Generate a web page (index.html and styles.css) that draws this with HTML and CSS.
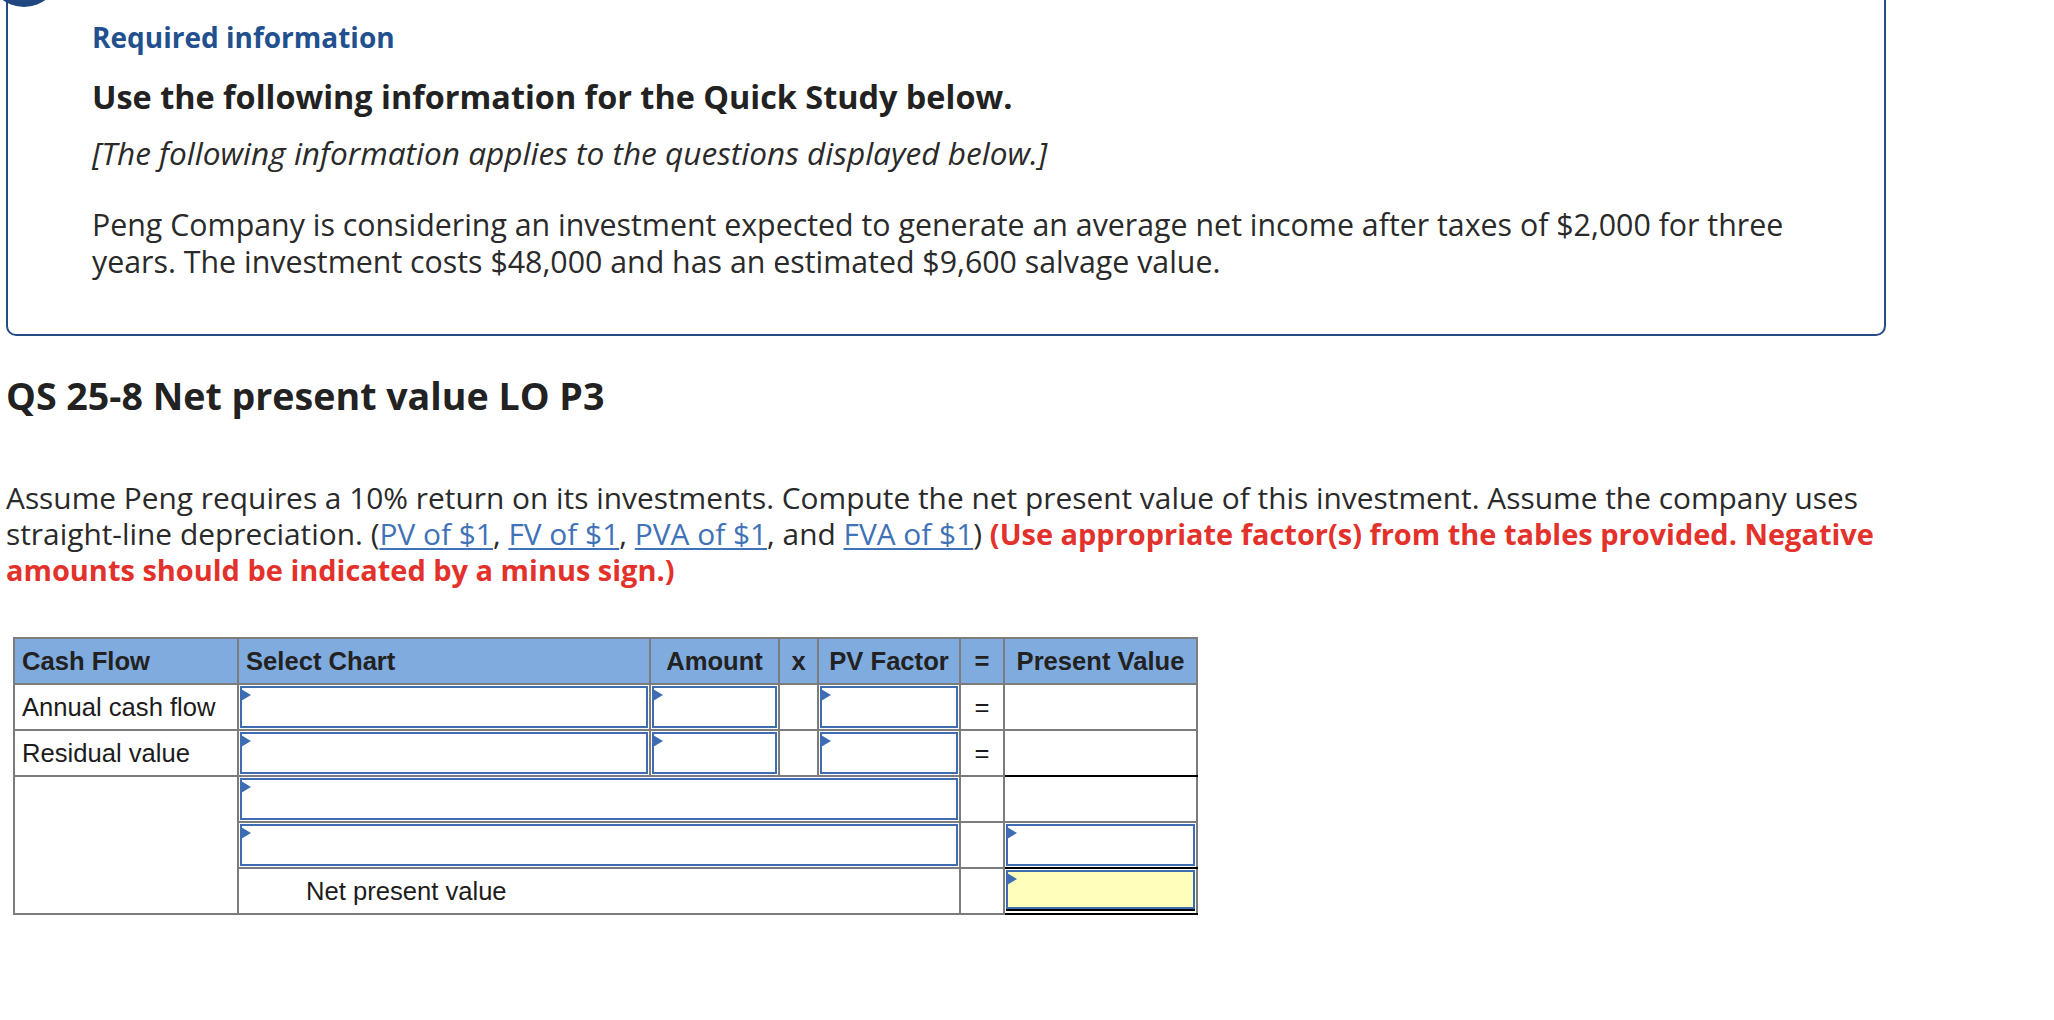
FILE: index.html
```html
<!DOCTYPE html>
<html lang="en">
<head>
<meta charset="utf-8">
<title>QS 25-8 Net present value</title>
<link rel="stylesheet" href="styles.css">
</head>
<body>
<div class="page">
  <section class="info-box">
    <span class="badge"></span>
    <h2 class="req">Required information</h2>
    <h3 class="use">Use the following information for the Quick Study below.</h3>
    <p class="note">[The following information applies to the questions displayed below.]</p>
    <p class="body-text">Peng Company is considering an investment expected to generate an average net income after taxes of $2,000 for three years. The investment costs $48,000 and has an estimated $9,600 salvage value.</p>
  </section>

  <h1 class="qs">QS 25-8 Net present value LO P3</h1>

  <p class="prompt">Assume Peng requires a 10% return on its investments. Compute the net present value of this investment. Assume the company uses straight-line depreciation. (<a href="#">PV of $1</a>, <a href="#">FV of $1</a>, <a href="#">PVA of $1</a>, and <a href="#">FVA of $1</a>) <strong class="warn">(Use appropriate factor(s) from the tables provided. Negative amounts should be indicated by a minus sign.)</strong></p>

  <table class="npv">
    <colgroup>
      <col class="c-flow">
      <col class="c-chart">
      <col class="c-amt">
      <col class="c-x">
      <col class="c-fac">
      <col class="c-eq">
      <col class="c-pv">
    </colgroup>
    <thead>
      <tr>
        <th class="left">Cash Flow</th>
        <th class="left">Select Chart</th>
        <th>Amount</th>
        <th>x</th>
        <th>PV Factor</th>
        <th>=</th>
        <th>Present Value</th>
      </tr>
    </thead>
    <tbody>
      <tr>
        <td class="label">Annual cash flow</td>
        <td class="in"><div class="inp"><span class="tri"></span></div></td>
        <td class="in"><div class="inp"><span class="tri"></span></div></td>
        <td></td>
        <td class="in"><div class="inp"><span class="tri"></span></div></td>
        <td class="eq">=</td>
        <td></td>
      </tr>
      <tr>
        <td class="label">Residual value</td>
        <td class="in"><div class="inp"><span class="tri"></span></div></td>
        <td class="in"><div class="inp"><span class="tri"></span></div></td>
        <td></td>
        <td class="in"><div class="inp"><span class="tri"></span></div></td>
        <td class="eq">=</td>
        <td class="sum"></td>
      </tr>
      <tr>
        <td rowspan="3"></td>
        <td class="in" colspan="4"><div class="inp"><span class="tri"></span></div></td>
        <td></td>
        <td></td>
      </tr>
      <tr>
        <td class="in" colspan="4"><div class="inp"><span class="tri"></span></div></td>
        <td></td>
        <td class="in sum"><div class="inp"><span class="tri"></span></div></td>
      </tr>
      <tr>
        <td class="npv-label" colspan="4">Net present value</td>
        <td></td>
        <td class="in sum total"><div class="inp yellow"><span class="tri"></span></div></td>
      </tr>
    </tbody>
  </table>
</div>
</body>
</html>
```

FILE: styles.css
```css
html, body {
  margin: 0;
  padding: 0;
  background: #ffffff;
}

body {
  font-family: "Open Sans", "Lato", sans-serif;
  color: #2a2a2a;
  overflow: hidden;
}

.page {
  padding-left: 6px;
  width: 1880px;
}

/* ---------- information box ---------- */
.info-box {
  position: relative;
  box-sizing: border-box;
  width: 1880px;
  margin-top: -40px;
  padding: 57px 44px 53.5px 84px;
  border: 2px solid #264c85;
  border-radius: 10px;
}

.badge {
  position: absolute;
  left: -20px;
  top: -27px;
  width: 72px;
  height: 72px;
  border-radius: 50%;
  background: #1f467f;
}

.req {
  margin: 0;
  font-size: 28px;
  line-height: 36px;
  font-weight: 700;
  color: #22508f;
}

.use {
  margin: 20.5px 0 0;
  font-size: 32.4px;
  line-height: 40px;
  font-weight: 700;
  color: #222222;
}

.note {
  margin: 19.4px 0 0;
  font-size: 31.6px;
  line-height: 36.7px;
  font-style: italic;
  color: #2a2a2a;
}

.body-text {
  margin: 35.5px 0 0;
  font-size: 30.33px;
  line-height: 36.7px;
  color: #2a2a2a;
}

/* ---------- question ---------- */
.qs {
  margin: 38.2px 0 0;
  font-size: 37.6px;
  line-height: 44px;
  font-weight: 700;
  color: #222222;
}

.prompt {
  margin: 61.5px -40px 0 0;
  font-size: 29.86px;
  line-height: 36.3px;
  color: #2a2a2a;
}

.prompt a {
  color: #3f72b6;
  text-decoration: underline;
  text-underline-offset: 3px;
}

.warn {
  color: #e3312b;
  font-weight: 700;
  font-size: 0.97em;
}

/* ---------- table ---------- */
.npv {
  margin: 48.5px 0 0 7px;
  border-collapse: collapse;
  table-layout: fixed;
  width: 1183px;
  font-family: "Liberation Sans", Arial, sans-serif;
  font-size: 25.6px;
  color: #1c1c1c;
}

.c-flow { width: 224px; }
.c-chart { width: 412px; }
.c-amt { width: 129px; }
.c-x { width: 39px; }
.c-fac { width: 142px; }
.c-eq { width: 44px; }
.c-pv { width: 193px; }

.npv tr {
  height: 46px;
}

.npv th,
.npv td {
  border: 2px solid #7c7c7c;
  padding: 0;
  vertical-align: middle;
}

.npv th {
  background: #80abde;
  font-weight: 700;
  color: #222222;
  text-align: center;
  white-space: nowrap;
}

.npv th.left {
  text-align: left;
  padding-left: 7px;
}

.npv td.label {
  padding-left: 7px;
}

.npv td.eq {
  text-align: center;
}

.npv td.in {
  padding: 1px 1px;
  vertical-align: top;
}

.npv td.npv-label {
  padding-left: 67px;
}

.npv td.sum {
  border-bottom: 2px solid #000000;
}

.inp {
  position: relative;
  box-sizing: border-box;
  height: 42px;
  border: 2px solid #3f6db2;
  background: #ffffff;
}

.inp.yellow {
  height: 39px;
  background: #ffffbb;
  box-shadow: 0 2px 0 #000000;
}

.tri {
  position: absolute;
  left: -1px;
  top: 1px;
  width: 0;
  height: 0;
  border-left: 10px solid #3f6db2;
  border-top: 6px solid transparent;
  border-bottom: 6px solid transparent;
}
```
